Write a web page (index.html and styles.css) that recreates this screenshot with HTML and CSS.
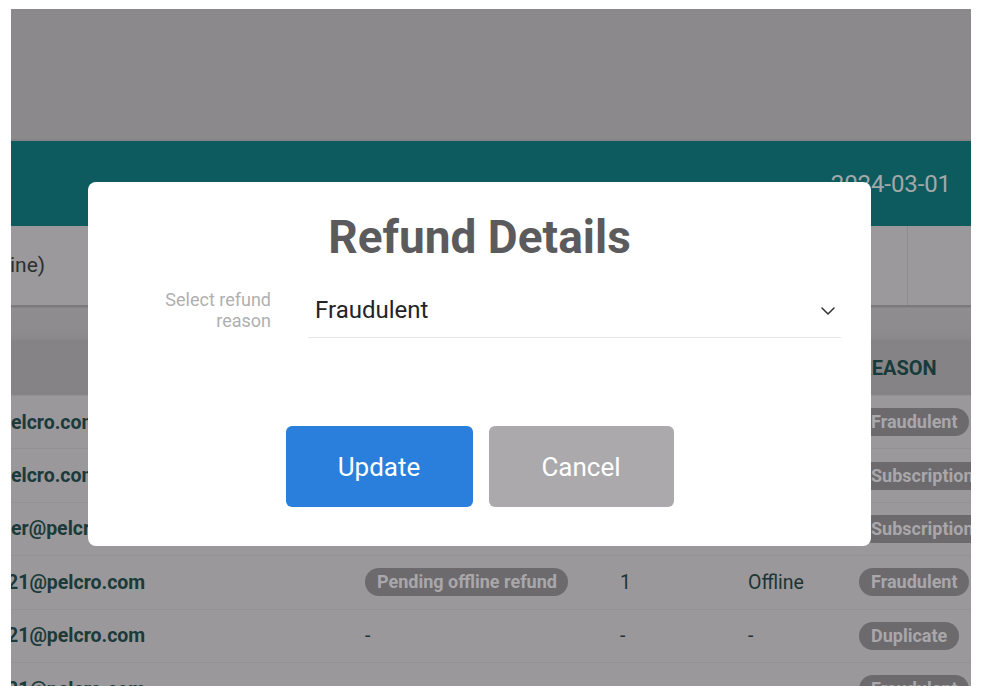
FILE: index.html
```html
<!DOCTYPE html>
<html lang="en">
<head>
<meta charset="utf-8">
<title>Refund Details</title>
<link rel="stylesheet" href="styles.css">
</head>
<body>
<div class="frame">
  <div class="top"></div>
  <div class="band"><span class="date">2024-03-01</span></div>
  <div class="summary">
    <span class="summary-text">ine)</span>
    <div class="summary-cell"></div>
  </div>
  <div class="shade"></div>
  <div class="table">
    <div class="row head">
      <div class="cell"></div>
      <div class="cell"></div>
      <div class="cell"></div>
      <div class="cell"></div>
      <div class="cell th">REASON</div>
    </div>
    <div class="row">
      <div class="cell email">elcro.com</div>
      <div class="cell"></div>
      <div class="cell"></div>
      <div class="cell"></div>
      <div class="cell"><span class="pill">Fraudulent</span></div>
    </div>
    <div class="row">
      <div class="cell email">elcro.com</div>
      <div class="cell"></div>
      <div class="cell"></div>
      <div class="cell"></div>
      <div class="cell"><span class="pill">Subscription</span></div>
    </div>
    <div class="row">
      <div class="cell email">er@pelcro.com</div>
      <div class="cell"></div>
      <div class="cell"></div>
      <div class="cell"></div>
      <div class="cell"><span class="pill">Subscription</span></div>
    </div>
    <div class="row">
      <div class="cell email cut">21@pelcro.com</div>
      <div class="cell"><span class="pill">Pending offline refund</span></div>
      <div class="cell">1</div>
      <div class="cell">Offline</div>
      <div class="cell"><span class="pill">Fraudulent</span></div>
    </div>
    <div class="row">
      <div class="cell email cut">21@pelcro.com</div>
      <div class="cell">-</div>
      <div class="cell">-</div>
      <div class="cell">-</div>
      <div class="cell"><span class="pill">Duplicate</span></div>
    </div>
    <div class="row">
      <div class="cell email cut">21@pelcro.com</div>
      <div class="cell">-</div>
      <div class="cell">-</div>
      <div class="cell">-</div>
      <div class="cell"><span class="pill">Fraudulent</span></div>
    </div>
  </div>

  <div class="modal">
    <h2 class="modal-title">Refund Details</h2>
    <div class="form-row">
      <label class="form-label">Select refund<br>reason</label>
      <div class="select">
        <span class="select-value">Fraudulent</span>
        <svg class="chevron" width="14" height="8" viewBox="0 0 14 8"><polyline points="1,1 7,7 13,1" fill="none" stroke="#333" stroke-width="1.5" stroke-linecap="round" stroke-linejoin="round"/></svg>
      </div>
    </div>
    <div class="actions">
      <button class="btn btn-primary">Update</button>
      <button class="btn btn-cancel">Cancel</button>
    </div>
  </div>
</div>
</body>
</html>
```

FILE: styles.css
```css
* { box-sizing: border-box; }
html, body { margin: 0; padding: 0; background: #ffffff; }
body { font-family: Roboto, "Liberation Sans", Arial, sans-serif; }

.frame {
  position: relative;
  margin: 9px 11px 0 11px;
  width: 960px;
  height: 677px;
  overflow: hidden;
  background: #9a989b;
}

.top { height: 132px; background: #8b898c; border-bottom: 2px solid #858386; }

.band {
  height: 85px;
  background: #0d5b5f;
  display: flex;
  align-items: center;
  justify-content: flex-end;
  padding-right: 20px;
}
.date { font-size: 24px; color: #a3a7a8; letter-spacing: -0.1px; }

.summary {
  height: 79px;
  background: #9b999c;
  display: flex;
  align-items: stretch;
}
.summary-text {
  flex: 1;
  display: flex;
  align-items: center;
  font-size: 21px;
  color: #2d2f30;
  margin-left: -1px;
  padding-bottom: 2px;
}
.summary-cell { width: 64px; border-left: 1px solid #8e8c8f; }

.shade {
  height: 35px;
  background: linear-gradient(#7c7a7d 0, #7c7a7d 2px, #8f8d90 3px, #8d8b8e 28px, #89878a 35px);
}

.table { display: flex; flex-direction: column; }
.row {
  display: grid;
  grid-template-columns: 354px 255px 128px 111px 1fr;
  height: 53.4px;
  border-bottom: 1px solid #939194;
  align-items: center;
  font-size: 19.5px;
  color: #1b3534;
  white-space: nowrap;
}
.row.head { height: 56px; background: #858386; border-bottom: 1px solid #939194; }
.th { font-weight: 700; color: #173b3a; font-size: 20px; }
.email { font-weight: 700; color: #1b3a39; font-size: 19.5px; }
.email.cut { margin-left: -4px; }

.pill {
  display: inline-block;
  height: 28px;
  line-height: 28px;
  padding: 0 11.5px 0 12px;
  border-radius: 14px;
  background: #6c6a6d;
  color: #a9a7aa;
  font-weight: 700;
  font-size: 18px;
}

.modal {
  position: absolute;
  left: 77px;
  top: 173px;
  width: 783px;
  height: 364px;
  background: #ffffff;
  border-radius: 8px;
  padding: 28px 30px 0 30px;
}
.modal-title {
  margin: 0;
  text-align: center;
  font-size: 46px;
  line-height: 54px;
  font-weight: 700;
  color: #5b5b5d;
}
.form-row {
  display: grid;
  grid-template-columns: 153px 1fr;
  column-gap: 37px;
  align-items: center;
  margin-top: 18px;
}
.form-label {
  text-align: right;
  font-size: 18px;
  line-height: 21px;
  color: #b0b0b0;
}
.select {
  height: 56px;
  border-bottom: 1px solid #e6e6e6;
  display: flex;
  align-items: center;
  justify-content: space-between;
  padding: 0 6px 0 7px;
}
.select-value { font-size: 24px; color: #222428; }
.chevron { display: block; margin-top: 2px; }

.actions {
  display: flex;
  justify-content: center;
  gap: 16px;
  margin-top: 88px;
}
.btn {
  width: 187px;
  height: 81px;
  border: none;
  border-radius: 6px;
  font-family: Roboto, "Liberation Sans", Arial, sans-serif;
  font-size: 26px;
  color: #ffffff;
}
.btn-primary { background: #2a7fdc; }
.btn-cancel { background: #aba9ac; width: 185px; }
```
